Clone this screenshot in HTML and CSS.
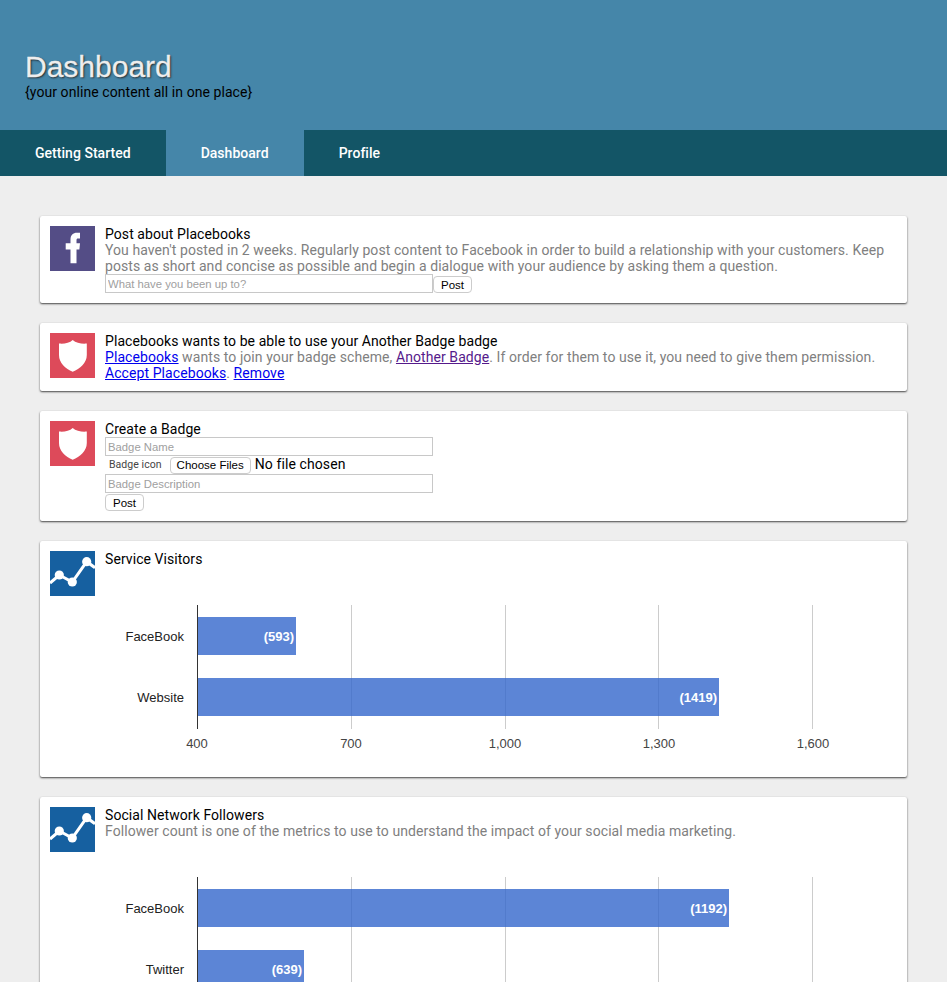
FILE: index.html
```html
<!DOCTYPE html>
<html lang="en">
<head>
    <meta charset="UTF-8">
    <title>Dashboard</title>
    <link rel="stylesheet" href="styles.css">
</head>
<body>

<header class="banner">
    <h1>Dashboard</h1>
    <p>{your online content all in one place}</p>
</header>

<nav class="tabs">
    <a href="#">Getting Started</a>
    <a href="#" class="active">Dashboard</a>
    <a href="#">Profile</a>
</nav>

<main class="feed">

    <section class="card">
        <svg class="icon facebook" viewBox="0 0 45 45">
            <path d="M20.5 37.3V23.5H15.7V17.3H20.5V13.5C20.5 9 23 6.7 27 6.7H30V12.5H28C26.8 12.5 26.5 13 26.5 14.2V17.3H30L29.4 23.5H26.5V37.3Z"/>
        </svg>
        <div class="body">
            <h2>Post about Placebooks</h2>
            <p>You haven't posted in 2 weeks. Regularly post content to Facebook in order to build a relationship with your customers. Keep posts as short and concise as possible and begin a dialogue with your audience by asking them a question.</p>
            <div class="inline-form">
                <input type="text" placeholder="What have you been up to?">
                <button>Post</button>
            </div>
        </div>
    </section>

    <section class="card">
        <svg class="icon badge" viewBox="0 0 45 45">
            <path d="M22.7 7C26 10 32 11.2 36.8 10.6V22C36.8 30 30 36 22.7 38.8C15.5 36 9 30 9 22V10.6C14 11.2 19.5 10 22.7 7Z"/>
        </svg>
        <div class="body">
            <h2>Placebooks wants to be able to use your Another Badge badge</h2>
            <p><a href="#">Placebooks</a> wants to join your badge scheme, <a href="#" class="visited">Another Badge</a>. If order for them to use it, you need to give them permission.<br>
            <a href="#">Accept Placebooks</a>. <a href="#">Remove</a></p>
        </div>
    </section>

    <section class="card">
        <svg class="icon badge" viewBox="0 0 45 45">
            <path d="M22.7 7C26 10 32 11.2 36.8 10.6V22C36.8 30 30 36 22.7 38.8C15.5 36 9 30 9 22V10.6C14 11.2 19.5 10 22.7 7Z"/>
        </svg>
        <div class="body">
            <h2>Create a Badge</h2>
            <form class="stack">
                <input type="text" placeholder="Badge Name">
                <div class="file-row">
                    <label for="badge-icon">Badge icon</label>
                    <input type="file" id="badge-icon" multiple>
                </div>
                <input type="text" placeholder="Badge Description">
                <button type="button">Post</button>
            </form>
        </div>
    </section>

    <section class="card">
        <svg class="icon stats" viewBox="0 0 45 45">
            <path d="M0 32L9.3 24L22.3 31L36.7 10.7L45 16.7"/>
            <circle cx="9.3" cy="24" r="4.6"/>
            <circle cx="22.3" cy="31" r="4.6"/>
            <circle cx="36.7" cy="10.7" r="4.6"/>
        </svg>
        <div class="body">
            <h2>Service Visitors</h2>
            <svg class="chart" viewBox="0 0 792 200">
                <line class="grid" x1="246.5" x2="246.5" y1="38" y2="162"/>
                <line class="grid" x1="400.5" x2="400.5" y1="38" y2="162"/>
                <line class="grid" x1="553.5" x2="553.5" y1="38" y2="162"/>
                <line class="grid" x1="707.5" x2="707.5" y1="38" y2="162"/>
                <rect class="bar" x="92" y="50" width="99" height="38"/>
                <rect class="bar" x="92" y="111" width="522" height="38"/>
                <line class="axis" x1="92.5" x2="92.5" y1="38" y2="162"/>
                <text class="label" x="79" y="74">FaceBook</text>
                <text class="label" x="79" y="135">Website</text>
                <text class="value" x="189" y="74">(593)</text>
                <text class="value" x="612" y="135">(1419)</text>
                <text class="tick" x="92" y="181">400</text>
                <text class="tick" x="246" y="181">700</text>
                <text class="tick" x="400" y="181">1,000</text>
                <text class="tick" x="554" y="181">1,300</text>
                <text class="tick" x="708" y="181">1,600</text>
            </svg>
        </div>
    </section>

    <section class="card">
        <svg class="icon stats" viewBox="0 0 45 45">
            <path d="M0 32L9.3 24L22.3 31L36.7 10.7L45 16.7"/>
            <circle cx="9.3" cy="24" r="4.6"/>
            <circle cx="22.3" cy="31" r="4.6"/>
            <circle cx="36.7" cy="10.7" r="4.6"/>
        </svg>
        <div class="body">
            <h2>Social Network Followers</h2>
            <p>Follower count is one of the metrics to use to understand the impact of your social media marketing.</p>
            <svg class="chart" viewBox="0 0 792 200">
                <line class="grid" x1="246.5" x2="246.5" y1="38" y2="162"/>
                <line class="grid" x1="400.5" x2="400.5" y1="38" y2="162"/>
                <line class="grid" x1="553.5" x2="553.5" y1="38" y2="162"/>
                <line class="grid" x1="707.5" x2="707.5" y1="38" y2="162"/>
                <rect class="bar" x="92" y="50" width="532" height="38"/>
                <rect class="bar" x="92" y="111" width="107" height="38"/>
                <line class="axis" x1="92.5" x2="92.5" y1="38" y2="162"/>
                <text class="label" x="79" y="74">FaceBook</text>
                <text class="label" x="79" y="135">Twitter</text>
                <text class="value" x="622" y="74">(1192)</text>
                <text class="value" x="197" y="135">(639)</text>
            </svg>
        </div>
    </section>

</main>

</body>
</html>
```

FILE: styles.css
```css
html, body {
    height: 100%;
    overflow: hidden;
}

body {
    margin: 0;
    background-color: #eee;
    font-family: Roboto, sans-serif;
    font-size: 14px;
    line-height: 16px;
    letter-spacing: 0.07px;
    color: #000;
}

.banner {
    height: 130px;
    box-sizing: border-box;
    padding: 50px 25px 0;
    background-color: #4586a9;
}

.banner h1 {
    margin: 0;
    font-family: "Liberation Sans", sans-serif;
    font-size: 30px;
    font-weight: normal;
    line-height: 34px;
    letter-spacing: 0;
    color: #eee;
    -webkit-text-stroke: 0.3px #eee;
    text-shadow: 1px 1px 2px #222;
}

.banner p {
    margin: 0;
}

.tabs {
    display: flex;
    height: 46px;
    background-color: #135566;
}

.tabs a {
    padding: 0 35px;
    font-weight: 500;
    line-height: 46px;
    letter-spacing: 0.03px;
    color: #fff;
    text-decoration: none;
}

.tabs a.active {
    background-color: #4586a9;
}

.feed {
    display: flex;
    flex-direction: column;
    gap: 20px;
    padding: 40px 40px 0;
}

.card {
    display: flex;
    gap: 10px;
    flex-shrink: 0;
    padding: 10px;
    background-color: #fff;
    border-radius: 2px;
    box-shadow: 0 1px 2px #444;
}

.icon {
    flex: 0 0 45px;
    width: 45px;
    height: 45px;
}

.icon.facebook {
    background-color: #544d86;
    fill: #fff;
}

.icon.badge {
    background-color: #dd4a5a;
    fill: #fff;
}

.icon.stats {
    background-color: #1660a0;
    fill: #fff;
}

.icon.stats path {
    fill: none;
    stroke: #fff;
    stroke-width: 3;
}

.body {
    flex: 1;
    min-width: 0;
}

.body h2 {
    margin: 0;
    font-size: 14px;
    font-weight: normal;
}

.body p {
    margin: 0;
    letter-spacing: 0.08px;
    color: #808080;
}

.body a {
    color: #00e;
}

.body a.visited {
    color: #551a8b;
}

.body input[type="text"] {
    box-sizing: border-box;
    width: 328px;
    height: 19px;
    margin: 0;
    padding: 0 2px;
    border: 1px solid #c8c8c8;
    font-family: "Liberation Sans", sans-serif;
    font-size: 11.3px;
    letter-spacing: 0;
}

.body input::placeholder {
    color: #a0a0a0;
}

.body button,
.body input::file-selector-button {
    box-sizing: border-box;
    height: 17px;
    padding: 0 7px;
    background-color: #fff;
    border: 1px solid #ccc;
    border-radius: 4px;
    font-family: "Liberation Sans", sans-serif;
    font-size: 11.5px;
    letter-spacing: 0;
    color: #000;
}

.inline-form {
    display: flex;
    align-items: flex-end;
}

.stack {
    display: flex;
    flex-direction: column;
    align-items: flex-start;
    gap: 0;
}

.stack button {
    margin-top: 1px;
}

.file-row {
    display: flex;
    align-items: center;
    height: 18px;
}

.file-row label {
    padding: 0 8px 0 4px;
    font-size: 10.5px;
    letter-spacing: 0.05px;
    color: #444;
}

.file-row input {
    font-family: Roboto, sans-serif;
    font-size: 14px;
    letter-spacing: 0.1px;
}

.file-row input::file-selector-button {
    margin-right: 4px;
    padding: 0 6px;
}

.chart {
    display: block;
    width: 792px;
    height: 200px;
    font-family: "Liberation Sans", sans-serif;
    font-size: 13px;
    letter-spacing: 0;
}

.grid {
    stroke: #ccc;
}

.axis {
    stroke: #333;
}

.bar {
    fill: #3366cc;
    opacity: 0.8;
}

.label {
    fill: #222;
    text-anchor: end;
}

.value {
    fill: #fff;
    font-weight: bold;
    text-anchor: end;
}

.tick {
    fill: #444;
    text-anchor: middle;
}
```
